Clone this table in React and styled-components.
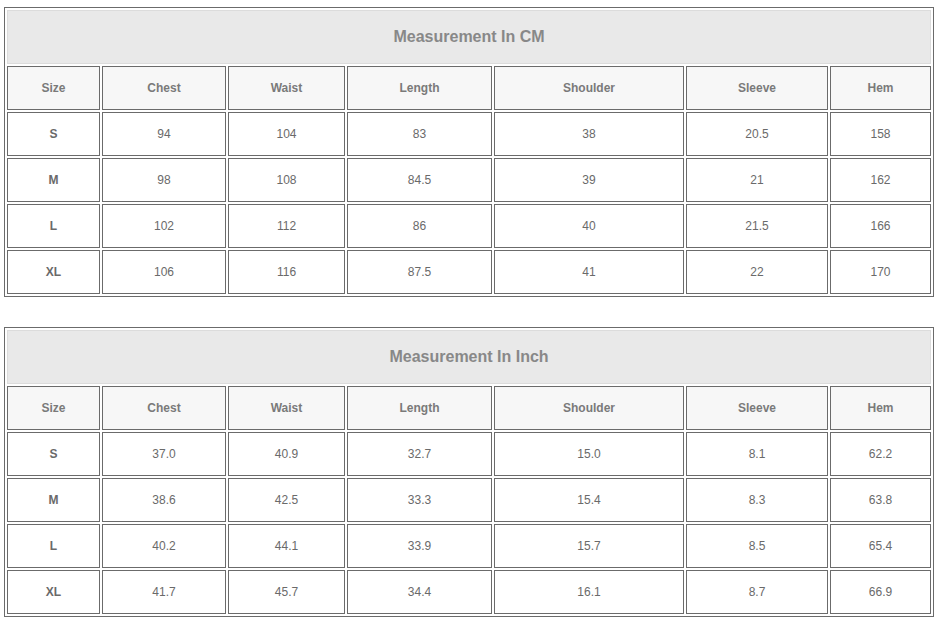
import React from 'react';
import styled, { createGlobalStyle } from 'styled-components';

const GlobalStyle = createGlobalStyle`
  body {
    margin: 0;
    background: #fff;
    font-family: "Liberation Sans", Arial, sans-serif;
  }
`

const Page = styled.div`
  padding: 7px 2px 0 4px;
  display: flex;
  flex-direction: column;
  gap: 30px;
`

const Table = styled.table`
  width: 930px;
  table-layout: fixed;
  border-collapse: separate;
  border-spacing: 2px;
  border: 1px solid #6b6b6b;
  font-family: "Liberation Sans", Arial, sans-serif;
`

const Title = styled.th`
  height: 54px;
  box-sizing: border-box;
  background: #e9e9e9;
  border: 1px solid #dcdcdc;
  color: #888;
  font-size: 16px;
  font-weight: bold;
  text-align: center;
  padding: 0;
`

const Head = styled.th`
  height: 44px;
  box-sizing: border-box;
  background: #f7f7f7;
  border: 1px solid #6b6b6b;
  color: #7a7a7a;
  font-size: 12px;
  font-weight: bold;
  text-align: center;
  padding: 0;
`

const Cell = styled.td`
  height: 44px;
  box-sizing: border-box;
  background: #fff;
  border: 1px solid #6b6b6b;
  color: #6a6a6a;
  font-size: 12px;
  font-weight: ${p => (p.$bold ? 'bold' : 'normal')};
  text-align: center;
  padding: 0;
`

const columns = [
  { name: 'Size', width: 93 },
  { name: 'Chest', width: 124 },
  { name: 'Waist', width: 117 },
  { name: 'Length', width: 145 },
  { name: 'Shoulder', width: 190 },
  { name: 'Sleeve', width: 142 },
  { name: 'Hem', width: 101 },
]

const cmRows = [
  ['S', '94', '104', '83', '38', '20.5', '158'],
  ['M', '98', '108', '84.5', '39', '21', '162'],
  ['L', '102', '112', '86', '40', '21.5', '166'],
  ['XL', '106', '116', '87.5', '41', '22', '170'],
]

const inchRows = [
  ['S', '37.0', '40.9', '32.7', '15.0', '8.1', '62.2'],
  ['M', '38.6', '42.5', '33.3', '15.4', '8.3', '63.8'],
  ['L', '40.2', '44.1', '33.9', '15.7', '8.5', '65.4'],
  ['XL', '41.7', '45.7', '34.4', '16.1', '8.7', '66.9'],
]

const SizeTable = ({ title, rows }) => (
  <Table>
    <colgroup>
      {columns.map(c => <col key={c.name} style={{ width: c.width }} />)}
    </colgroup>
    <thead>
      <tr>
        <Title colSpan={columns.length}>{title}</Title>
      </tr>
    </thead>
    <tbody>
      <tr>
        {columns.map(c => <Head key={c.name}>{c.name}</Head>)}
      </tr>
      {rows.map(row => (
        <tr key={row[0]}>
          {row.map((v, i) => <Cell key={i} $bold={i === 0}>{v}</Cell>)}
        </tr>
      ))}
    </tbody>
  </Table>
)

export default function App() {
  return (
    <>
      <GlobalStyle />
      <Page>
        <SizeTable title="Measurement In CM" rows={cmRows} />
        <SizeTable title="Measurement In Inch" rows={inchRows} />
      </Page>
    </>
  );
}
